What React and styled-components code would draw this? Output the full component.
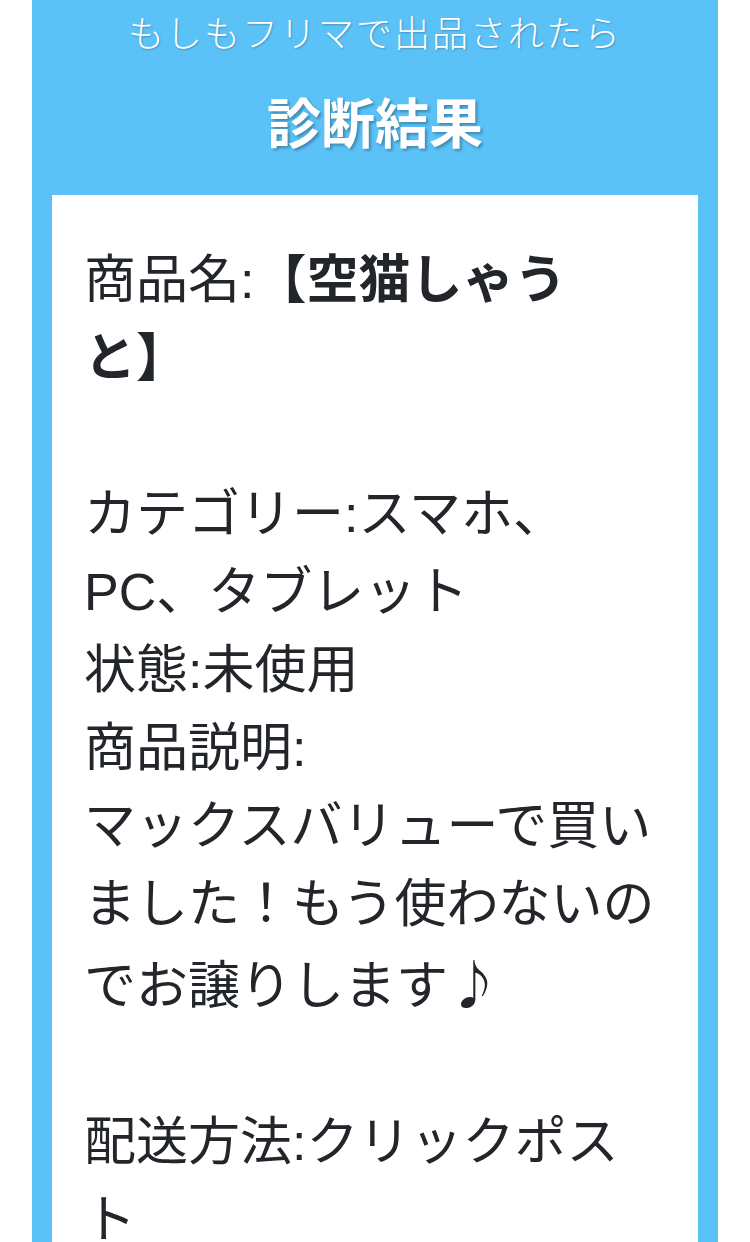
import React from "react";
import styled, { createGlobalStyle } from "styled-components";

const GlobalStyle = createGlobalStyle`
  body {
    margin: 0;
    background: #ffffff;
    font-family: "Liberation Sans", "Noto Sans CJK JP", sans-serif;
  }
`;

const Panel = styled.section`
  margin: 0 32px;
  padding: 8px 20px 40px;
  background-color: #5bc2f8;
`;

const Lead = styled.p`
  margin: 0;
  font-size: 36px;
  line-height: 54px;
  font-weight: 300;
  letter-spacing: 2px;
  text-align: center;
  color: #ffffff;
  text-shadow: 1px 1px 2px rgba(0, 0, 0, 0.25);
`;

const Title = styled.h1`
  margin: 34px 0 41px;
  font-size: 54px;
  line-height: 58px;
  font-weight: bold;
  text-align: center;
  color: #ffffff;
  text-shadow: 2px 2px 3px rgba(0, 0, 0, 0.3);
`;

const ResultCard = styled.div`
  background-color: #ffffff;
  padding: 46px 38px 48px 32px;
  color: #222529;
  font-size: 52px;
  line-height: 78px;
`;

const Line = styled.div`
  min-height: ${({ blank }) => (blank ? "78px" : "0")};
`;

const Strong = styled.b`
  font-weight: bold;
`;

const Note = styled.span`
  font-family: "Noto Sans CJK JP", sans-serif;
`;

const App = () => {
  return (
    <>
      <GlobalStyle />
      <Panel>
        <Lead>もしもフリマで出品されたら</Lead>
        <Title>診断結果</Title>
        <ResultCard>
          <Line>
            商品名:<Strong>【空猫しゃう<wbr />と】</Strong>
          </Line>
          <Line blank />
          <Line>カテゴリー:スマホ、PC、タブレット</Line>
          <Line>状態:未使用</Line>
          <Line>商品説明:</Line>
          <Line>
            マックスバリューで買いました！もう使わないのでお譲りします
            <Note>♪</Note>
          </Line>
          <Line blank />
          <Line>配送方法:クリックポスト</Line>
        </ResultCard>
      </Panel>
    </>
  );
};

export default App;
